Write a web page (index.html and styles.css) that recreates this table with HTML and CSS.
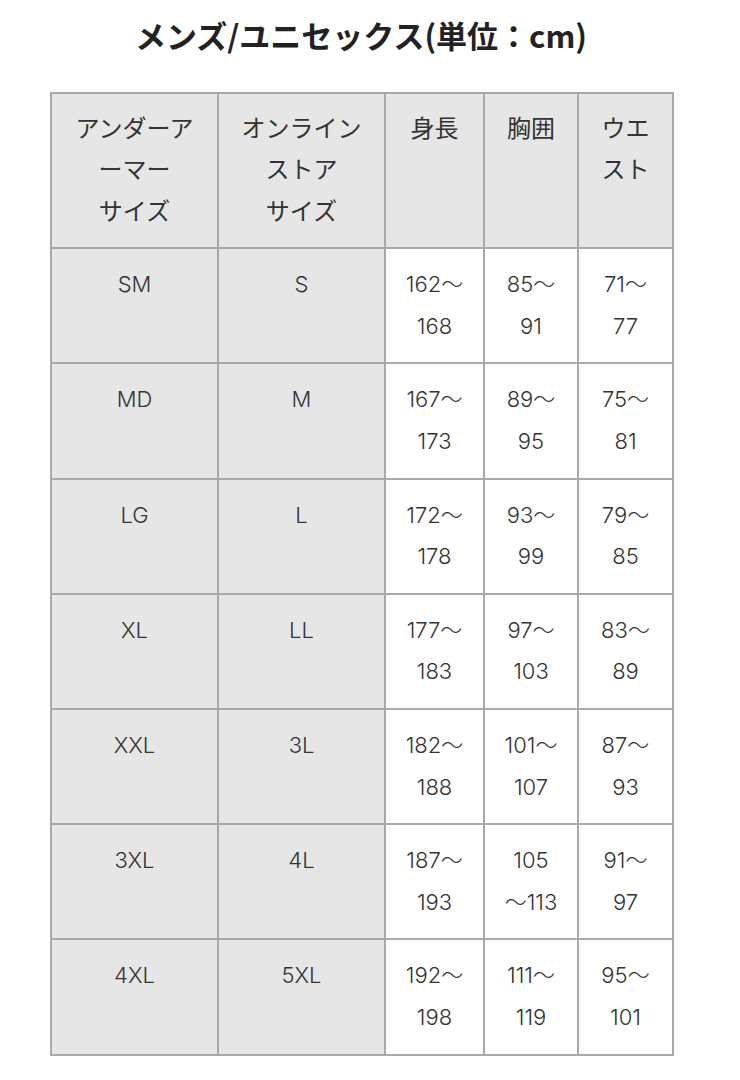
FILE: index.html
```html
<!DOCTYPE html>
<html lang="ja">
<head>
<meta charset="utf-8">
<link rel="stylesheet" href="styles.css">
</head>
<body>
<div class="wrap">
  <h1 class="title">メンズ/ユニセックス(単位：cm)</h1>
  <table class="size">
    <colgroup>
      <col class="c1"><col class="c2"><col class="c3"><col class="c4"><col class="c5">
    </colgroup>
    <thead>
      <tr>
        <th>アンダーア<br>ーマー<br>サイズ</th>
        <th>オンライン<br>ストア<br>サイズ</th>
        <th>身長</th>
        <th>胸囲</th>
        <th>ウエ<br>スト</th>
      </tr>
    </thead>
    <tbody>
      <tr><th>SM</th><th>S</th><td>162〜<br>168</td><td>85〜<br>91</td><td>71〜<br>77</td></tr>
      <tr><th>MD</th><th>M</th><td>167〜<br>173</td><td>89〜<br>95</td><td>75〜<br>81</td></tr>
      <tr><th>LG</th><th>L</th><td>172〜<br>178</td><td>93〜<br>99</td><td>79〜<br>85</td></tr>
      <tr><th>XL</th><th>LL</th><td>177〜<br>183</td><td>97〜<br>103</td><td>83〜<br>89</td></tr>
      <tr><th>XXL</th><th>3L</th><td>182〜<br>188</td><td>101〜<br>107</td><td>87〜<br>93</td></tr>
      <tr><th>3XL</th><th>4L</th><td>187〜<br>193</td><td>105<br>〜113</td><td>91〜<br>97</td></tr>
      <tr><th>4XL</th><th>5XL</th><td>192〜<br>198</td><td>111〜<br>119</td><td>95〜<br>101</td></tr>
    </tbody>
  </table>
</div>
</body>
</html>
```

FILE: styles.css
```css
html, body {
  margin: 0;
  padding: 0;
  background: #ffffff;
}
body {
  font-family: "Inter", "Noto Sans CJK JP", sans-serif;
  color: #333333;
}
.wrap {
  width: 622px;
  margin-left: 50px;
}
.title {
  margin: 15px 0 37px;
  font-family: "Noto Sans CJK JP", sans-serif;
  font-size: 31px;
  line-height: 40px;
  font-weight: 700;
  color: #222222;
  text-align: center;
  white-space: nowrap;
}
.size {
  width: 622px;
  table-layout: fixed;
  border-collapse: collapse;
  border: 2px solid #a9a9a9;
}
.c1 { width: 167px; }
.c2 { width: 167px; }
.c3 { width: 99px; }
.c4 { width: 94px; }
.c5 { width: 95px; }
.size th,
.size td {
  border: 2px solid #a9a9a9;
  padding: 15px 4px;
  font-size: 22px;
  line-height: 41.6px;
  font-weight: 300;
  text-align: center;
  vertical-align: top;
}
.size th {
  background: #e6e6e6;
}
.size thead th {
  font-family: "Noto Sans CJK JP", sans-serif;
  font-weight: 400;
  font-size: 24px;
  line-height: 41.4px;
  padding-top: 12px;
  padding-bottom: 17px;
}
.size td {
  background: #ffffff;
}
```
